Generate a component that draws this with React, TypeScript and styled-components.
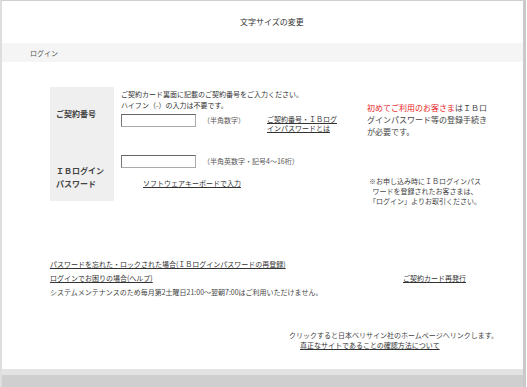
import styled, { createGlobalStyle } from "styled-components";

const GlobalStyle = createGlobalStyle`
  html, body {
    margin: 0;
    padding: 0;
    background: #fff;
  }
  body {
    font-family: "Noto Sans CJK JP", "Noto Sans", sans-serif;
    color: #333;
  }
`;

const Frame = styled.div`
  width: 521px;
  height: 386px;
  border-top: 1px solid #cfcfcf;
  border-left: 2px solid #dedede;
  border-right: 3px solid #c9c9c9;
  display: flex;
  flex-direction: column;
  background: #fff;
`;

const Header = styled.div`
  height: 42px;
  display: flex;
  align-items: center;
  justify-content: center;
  padding-left: 19px;
  font-size: 8px;
  line-height: 10px;
  color: #333;
`;

const LoginBar = styled.div`
  height: 19px;
  background: #f5f5f5;
  display: flex;
  align-items: center;
  padding-left: 28px;
  font-size: 7px;
  color: #555;
`;

const Main = styled.div`
  padding: 25px 0 0 48px;
  font-size: 7px;
  line-height: 11px;
`;

const FormGrid = styled.div`
  display: grid;
  grid-template-columns: 64px 246px 130px;
  grid-template-rows: 53px 61px;
`;

const LabelCell = styled.div<{ $top?: number }>`
  background: #efefef;
  padding-left: 6px;
  font-size: 8px;
  line-height: 13px;
  font-weight: bold;
  color: #444;
  display: flex;
  flex-direction: column;
  justify-content: ${({ $top }) => ($top === undefined ? "center" : "flex-start")};
  padding-top: ${({ $top }) => $top ?? 0}px;
  box-sizing: border-box;
`;

const FieldCell = styled.div<{ $top: number }>`
  padding: ${({ $top }) => $top}px 0 0 7px;
  display: flex;
  flex-direction: column;
`;

const InputRow = styled.div`
  display: flex;
  align-items: flex-start;
  margin-top: 3px;
`;

const TextInput = styled.input`
  width: 75px;
  height: 13px;
  box-sizing: border-box;
  border: 1px solid #aaa;
  border-top-color: #666;
  border-left-color: #777;
  padding: 0;
  margin: 0;
  flex: none;
`;

const Hint = styled.span`
  margin-left: 7px;
  line-height: 13px;
  color: #555;
  white-space: nowrap;
`;

const SideLink = styled.a`
  margin-left: 22px;
  margin-top: 1px;
  width: 70px;
  line-height: 9px;
  color: #333;
  text-decoration: underline;
`;

const KeyboardLink = styled.a`
  margin: 10px 0 0 22px;
  line-height: 10px;
  color: #333;
  text-decoration: underline;
  align-self: flex-start;
`;

const NoteCell = styled.div<{ $top: number; $center?: boolean }>`
  padding: ${({ $top }) => $top}px 0 0 ${({ $center }) => ($center ? 0 : 7)}px;
  text-align: ${({ $center }) => ($center ? "center" : "left")};
  font-size: ${({ $center }) => ($center ? 7 : 8)}px;
  line-height: ${({ $center }) => ($center ? 10 : 12)}px;
  color: #444;
  white-space: nowrap;
`;

const Red = styled.span`
  color: #e8262a;
`;

const LinkList = styled.div`
  margin-top: 56px;
  width: 416px;
  display: flex;
  flex-direction: column;
`;

const LinkRow = styled.div`
  display: flex;
  justify-content: space-between;
  line-height: 14px;
`;

const TextLink = styled.a`
  color: #333;
  text-decoration: underline;
`;

const Notice = styled.div`
  line-height: 15px;
  color: #444;
`;

const Footer = styled.div`
  margin-top: 30px;
  padding-left: 287px;
  font-size: 7px;
  line-height: 10px;
  color: #444;
  display: flex;
  flex-direction: column;
`;

const FooterLink = styled.a`
  margin-left: 11px;
  color: #333;
  text-decoration: underline;
  align-self: flex-start;
`;

const Bottom = styled.div`
  margin-top: auto;
`;

const BandLight = styled.div`
  height: 6px;
  background: #e3e3e3;
`;

const BandDark = styled.div`
  height: 12px;
  background: #cfcfcf;
`;

export default function App() {
  return (
    <>
      <GlobalStyle />
      <Frame>
        <Header>文字サイズの変更</Header>
        <LoginBar>ログイン</LoginBar>
        <Main>
          <FormGrid>
            <LabelCell>ご契約番号</LabelCell>
            <FieldCell $top={2}>
              <div>ご契約カード裏面に記載のご契約番号をご入力ください。</div>
              <div>ハイフン（-）の入力は不要です。</div>
              <InputRow>
                <TextInput type="text" />
                <Hint>（半角数字）</Hint>
                <SideLink href="#">ご契約番号・ＩＢログインパスワードとは</SideLink>
              </InputRow>
            </FieldCell>
            <NoteCell $top={15}>
              <Red>初めてご利用のお客さま</Red>はＩＢロ
              <br />
              グインパスワード等の登録手続き
              <br />
              が必要です。
            </NoteCell>

            <LabelCell $top={24}>
              <span>ＩＢログイン</span>
              <span>パスワード</span>
            </LabelCell>
            <FieldCell $top={15}>
              <InputRow style={{ marginTop: 0 }}>
                <TextInput type="password" />
                <Hint>（半角英数字・記号4～16桁）</Hint>
              </InputRow>
              <KeyboardLink href="#">ソフトウェアキーボードで入力</KeyboardLink>
            </FieldCell>
            <NoteCell $top={36} $center>
              ※お申し込み時にＩＢログインパス
              <br />
              ワードを登録されたお客さまは、
              <br />
              「ログイン」よりお取引ください。
            </NoteCell>
          </FormGrid>

          <LinkList>
            <LinkRow>
              <TextLink href="#">
                パスワードを忘れた・ロックされた場合(ＩＢログインパスワードの再登録)
              </TextLink>
            </LinkRow>
            <LinkRow>
              <TextLink href="#">ログインでお困りの場合(ヘルプ)</TextLink>
              <TextLink href="#">ご契約カード再発行</TextLink>
            </LinkRow>
            <Notice>
              システムメンテナンスのため毎月第2土曜日21:00～翌朝7:00はご利用いただけません。
            </Notice>
          </LinkList>
        </Main>
        <Footer>
          <span>クリックすると日本ベリサイン社のホームページへリンクします。</span>
          <FooterLink href="#">真正なサイトであることの確認方法について</FooterLink>
        </Footer>
        <Bottom>
          <BandLight />
          <BandDark />
        </Bottom>
      </Frame>
    </>
  );
}
